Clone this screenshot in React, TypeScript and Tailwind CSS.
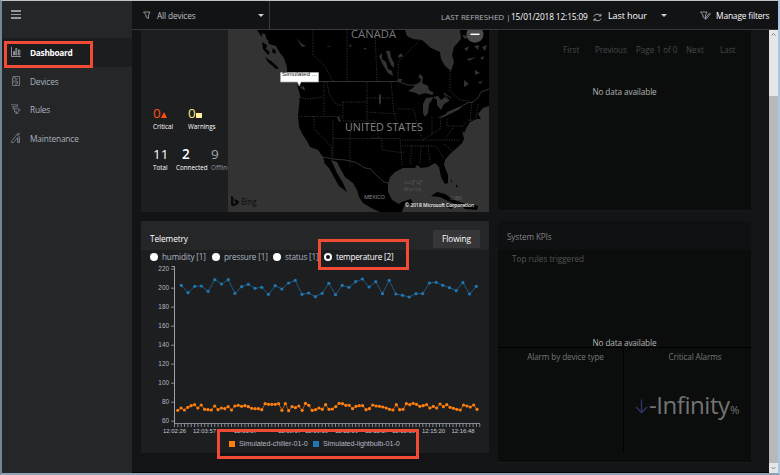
import type { ReactNode } from "react";

const blue = [
  211, 233, 214, 213, 229, 194, 207, 194, 235, 215, 208, 220, 217, 238, 212, 222, 204, 196, 238, 234, 245, 235, 205, 239,
  211, 217, 200, 192, 216, 200, 236, 196, 237, 241, 246, 236, 236, 204, 202, 211, 218, 227, 203, 237, 214,
].map((v, i) => [181.3 + i * 6.705, 215 + v / 3]);

const orange = [
  211, 204, 210, 202, 197, 194, 204, 195, 208, 209, 210, 198, 209, 204, 206, 200, 210, 198, 196, 199, 197, 200, 205, 206,
  206, 209, 191, 193, 193, 193, 191, 211, 191, 212, 200, 203, 198, 211, 190, 196, 211, 209, 204, 208, 194, 208, 207, 200,
  190, 191, 196, 196, 206, 199, 197, 197, 209, 206, 195, 198, 199, 201, 204, 208, 210, 194, 209, 208, 191, 194, 190, 193,
  199, 197, 194, 204, 199, 204, 192, 200, 194, 202, 205, 208, 210, 195, 198, 201, 195, 208,
].map((v, i) => [177.7 + i * 3.363, 340 + v / 3]);

const yTicks = [220, 200, 180, 160, 140, 120, 100, 80, 60];
const xTicks: [number, string][] = [
  [174, "12:02:26"],
  [204, "12:03:57"],
  [245, "12:05:57"],
  [289, "12:08:07"],
  [316, "12:09:39"],
  [346, "12:11:09"],
  [376, "12:12:37"],
  [403, "12:13:59"],
  [433, "12:15:20"],
  [462.5, "12:16:48"],
];

function Series({ points, color, r }: { points: number[][]; color: string; r: number }) {
  return (
    <g>
      <polyline points={points.map((p) => p.join(",")).join(" ")} fill="none" stroke={color} strokeWidth="0.8" opacity="0.8" />
      {points.map((p, i) => (
        <circle key={i} cx={p[0]} cy={p[1]} r={r} fill={color} />
      ))}
    </g>
  );
}

function Chart() {
  return (
    <svg className="block h-[170px] w-[348px]" viewBox="141 264 348 170" fontFamily="Liberation Sans, sans-serif">
      <path d="M171.5 266.5H174.5V423.5" fill="none" stroke="#9aa3ae" strokeWidth="1" />
      {yTicks.map((t, i) => (
        <g key={t}>
          <path d={`M171 ${269.2 + i * 19}h3`} stroke="#9aa3ae" strokeWidth="0.8" />
          <text x="169" y={271.4 + i * 19} fontSize="6.4" textAnchor="end" fill="#b2bac4">
            {t}
          </text>
        </g>
      ))}
      <path d="M174 423.5H480" stroke="#8b939d" strokeWidth="0.9" />
      {Array.from({ length: 92 }, (_, i) => (
        <path key={i} d={`M${174.5 + i * 3.355} 423.5v3.5`} stroke="#9aa3ae" strokeWidth="0.8" />
      ))}
      {xTicks.map(([x, t]) => (
        <text key={t} x={x + 0.5} y="432.7" fontSize="6.2" textLength="23" lengthAdjust="spacingAndGlyphs" textAnchor="middle" fill="#c4cad2">
          {t}
        </text>
      ))}
      <Series points={blue} color="#1f77b4" r={1.6} />
      <Series points={orange} color="#ff7f0e" r={1.6} />
    </svg>
  );
}

function WorldMap() {
  return (
    <svg className="block h-[182px] w-[261px]" viewBox="228 30 261 182" fontFamily="Open Sans, sans-serif">
      <rect x="228" y="30" width="261" height="182" fill="#333333" />
      <path
        fill="#000"
        d="M257 30L261 36 266 37 269 44 276 46 280 53 284 58 287 67 287 72 297 82 298 88 300 95 299 106 298 116 299 127 303 135 307 141 310 147 318 150 323 157 325 164 329 168 335 179 339 186 347 192 343 183 337 173 333 164 331 160 337 162 340 168 345 177 353 183 357 190 359 197 363 203 373 209 380 212H402L404 206 413 204 411 199 402 202 399 204 392 200 388 192 388 184 390 177 395 172 403 168 415 168 417 165 421 168 428 167 435 163 439 167 441 177 445 184 448 183 448 175 444 165 445 160 450 154 457 148 462 143 464 139 462 130 464 133 467 127 470 122 477 119 481 119 478 114 483 108 489 106V30H460L461 39 454 47 452 55 454 62 451 71 445 66 441 59 440 52 431 48 422 40 413 39 407 36 405 30Z"
      />
      <path fill="#333" d="M269 47l3 3-2 4 4 1 0 4 5 4-4 2-5-6 1-4-4-4zM262 33l4 2-1 4 4 2-2 2-5-5z" />
      <path fill="#000" d="M262 42l5 3-1 4 4 3-2 3-5-6zM265 57l6 4 8 7-3 1-8-7zM273 48l3 3-1 3-3-2z" />
      <g fill="#333">
        <path d="M408 91l5-3 2-3 5-3 1-3-3-2 2-3 3 3-1 6 6 3 1 4 5 3-2 2-7-2-6 2-3-2z" />
        <path d="M433 97l-7 1-3 6 0 9 2 4 3-4 1-9 3-4zM433 97l5-1 3 4 4-3 4 4-5 3-3 6-4-5 0-5z" />
        <path d="M437 118l9-4 1-2 12-5 3 0-4 3-6 3-8 4zM379 56l3-3 0 6 4 3 2 7 4 2 1 5-5-3-5-8zM386 51l4 0 1 6 3 6 0 5-3-3-3-7zM398 56l3-3 2 3-4 2zM337 117l2 0 2 4-2 1zM379 94l2 1 0 8-2 2zM398 79l4 0-1 3-3-1z" />
        <path d="M296 38l6 6 4 2-4 1zM349 44l3 2-2 1zM327 46l4 0-3 1zM364 48l3 0-3 2z" />
        <path d="M449 42l4-2-3 4zM464 49l5-3-2 5zM467 59l9-2-7 4zM475 70l5 3-5 2zM464 80l5 4-5 3zM480 58l4-2-1 4zM478 82l5-1-3 3zM462 35l8 1-5 3zM474 37l6-3 1 4zM474 46l5-1-1 5zM482 47l5-2-2 6z" />
        <path d="M299 84l3 3 2-1 1 5-4-3zM478 128l1 4-2-5z" />
      </g>
      <g fill="#000">
        <path d="M431 196l6-4 8 2 9 6 12 4-9 1-9-4-8-4zM462 206l8-2 8 2-1 4-12-1zM447 207l6 0-2 2zM451 178l1 4-1 0zM456 184l2 3-2 0z" />
      </g>
      <g fill="none" stroke="#3c3c3c" strokeWidth="0.8">
        <path d="M297 81.5H398L408 85 416 85M451 98L444 93 449 101M457 109l10-6 6-1 5-4 3-6 8-3M323 157l10 2 12 1 10 2 10 6 6 1 5 6 8 7 5 1" />
        <path
          strokeDasharray="1.2 1.4"
          d="M313 30V55L324 65 333 81M347 30V81M375 30L377 81M398 81V62L421 39M450 71V91L460 100 470 101M300 97l6 2 17-2M324 82V116M299 116.5H343M327 82l2 12 8 11h6M314 116v13l18 18-1 11M343 102V121H375M333 121V160M333 138.5H400M350 121V168M367 82V127M367 98H391M367 112l30 2M391 82l3 32 6 16M343 102H367M375 121l4 17M371 138h11v12l22 3M398 109H414M398 128H417M400 138l2 27M412 145l-2 19M402 146H435M402 140H460M414 110l5 22 5 9M432 117v17M441 118l-1 11-16 10M447 119v7h16M454 126l-9 13M421 146l-1 18M428 146l2 17M436 146l8 13M444 144l10 8M472 102l-2 19M478 104l-2 15M468 120h11M462 127l4-5"
        />
      </g>
      <text x="351" y="38.4" fontSize="10.6" fill="#787878" textLength="45" lengthAdjust="spacingAndGlyphs">CANADA</text>
      <text x="345" y="131" fontSize="10.6" fill="#858585" textLength="78" lengthAdjust="spacingAndGlyphs">UNITED STATES</text>
      <text x="364" y="199" fontSize="5.6" fill="#949494" textLength="21" lengthAdjust="spacingAndGlyphs">MEXICO</text>
      <g fontSize="5.2" fontStyle="italic" fill="#0c0c0c" stroke="#707070" strokeWidth="0.2">
        <text x="403.500" y="184" textLength="18" lengthAdjust="spacingAndGlyphs">Gulf of</text>
        <text x="403.500" y="191.400" textLength="18" lengthAdjust="spacingAndGlyphs">Mexico</text>
      </g>
      <text x="450" y="200" fontSize="4.500" fill="#666">CUBA</text>
      <text x="405" y="207.300" fontSize="5.800" fill="#f2f2f2" stroke="#f2f2f2" strokeWidth="0.100" textLength="69" lengthAdjust="spacingAndGlyphs">© 2018 Microsoft Corporation</text>
      <path d="M231 196l2.300 1v7l3-1.600-1.500-.8-1-2.600 5 2v2.600l-5.400 3-2.400-1.500z" fill="#080808" />
      <text x="241" y="205" fontSize="8.400" fill="#0c0c0c" textLength="15.500" lengthAdjust="spacingAndGlyphs">Bing</text>
      <circle cx="475" cy="34.300" r="8.500" fill="#4a4a4a" />
      <path d="M470.500 34.300h9" stroke="#fff" strokeWidth="1.500" />
      <path d="M280.500 72.500h38v9.500h-17.500l-1.800 4-1.800-4h-16.900z" fill="#fff" stroke="#aaa" strokeWidth="0.700" />
      <text x="282" y="76.300" fontSize="6.200" fontFamily="Liberation Sans, sans-serif" fill="#1a1a1a" textLength="35" lengthAdjust="spacingAndGlyphs">Simulated ...</text>
    </svg>
  );
}

function NavIcon({ children }: { children: ReactNode }) {
  return (
    <svg viewBox="0 0 10 10" className="h-[10px] w-[10px] shrink-0" fill="none" stroke="#7e8791" strokeWidth="0.8">
      {children}
    </svg>
  );
}

const nav: [string, ReactNode][] = [
  ["Dashboard", <path key="a" d="M.5 0v9.500H10M2.500 8V4.500h1V8zM4.800 8V1.500h1V8zM7.500 8V3h1.300v5z" stroke="#a5acb3" />],
  ["Devices", <path key="b" d="M2 2V.5h6.500v9H4.500M1.500 2h3.500v7.500H1.500zM3 4v3M6.500 2.500v1M6.500 5v3" />],
  ["Rules", <path key="c" d="M0 .8h6.500v2H1.200M2 2.800v2h6v2M3.500 4.800v3h2M5.500 9.300L9.500 5.300M5.500 9.300l-.3-2M7.500 9.300H4" />],
  ["Maintenance", <path key="d" d="M.5 9.500V8L4.500 3.500 6 1 8.500.5 7 2.500 8.500 4v5.500H6.500V4.500L2.500 9.500zM6.500 6h2M6.500 8h2" />],
];

function Sidebar() {
  return (
    <aside className="flex w-[130px] shrink-0 flex-col bg-[#252628]">
      <div className="flex h-[37px] shrink-0 flex-col gap-[2px] pl-[9px] pt-[9px]">
        <span className="h-[1.500px] w-[10px] bg-[#969a9e]" />
        <span className="h-[1.500px] w-[10px] bg-[#969a9e]" />
        <span className="h-[1.500px] w-[10px] bg-[#969a9e]" />
      </div>
      {nav.map(([label, icon], i) => (
        <div
          key={label}
          className={
            "flex h-[28.600px] shrink-0 items-center gap-[9px] pl-[9px] text-[8.300px] " +
            (i === 0 ? "bg-[#1c1d1f] font-bold text-white" : "text-[#a9b3be]")
          }
        >
          <NavIcon>{icon}</NavIcon>
          <span className={i === 0 ? "pt-[2px] tracking-[-0.3px]" : "pt-[2px] tracking-[-0.15px]"}>{label}</span>
        </div>
      ))}
    </aside>
  );
}

function Caret() {
  return <span className="h-0 w-0 border-x-[3px] border-t-[3px] border-x-transparent border-t-[#c9cdd0]" />;
}

function Funnel({ edit }: { edit?: boolean }) {
  return (
    <svg viewBox="0 0 11 9" className="h-[9px] w-[11px]" fill="none" stroke="#aab0b6" strokeWidth="0.8">
      <path d="M.5 1H7L5.500 4v3.500L3 6V4z" />
      {edit && <path d="M5.500 7l4-5 1 .8-4 5-1.300.4z" />}
    </svg>
  );
}

function Header() {
  return (
    <header className="flex h-[29px] shrink-0 border-b border-[#38383c] bg-[#121315] text-[8.500px] text-white">
      <div className="flex w-[138px] items-center border-r border-[#38383c] pl-[11px] pr-[5px] text-[#b8c0c8]">
        <Funnel />
        <span className="ml-[3px] flex-1 pt-[2px] text-[8.300px] tracking-[-0.15px]">All devices</span>
        <Caret />
      </div>
      <div className="flex flex-1 items-center pl-[171px]">
        <span className="w-[70px] whitespace-nowrap pt-[4px] text-[8px] tracking-[-0.03px] text-[#adb5bd]">LAST REFRESHED |</span>
        <span className="w-[82px] whitespace-nowrap pt-[4px] text-[8.300px] tracking-[-0.12px]">15/01/2018 12:15:09</span>
        <svg viewBox="0 0 9 9" className="mt-[4px] h-[9px] w-[9px]" fill="none" stroke="#b9bfc5" strokeWidth="0.900">
          <path d="M.8 3.500C1.500 1 6 .3 7.600 3M8 .8V3H5.800M8.200 5.500C7.500 8 3 8.700 1.400 6M1 8.200V6h2.200" />
        </svg>
        <span className="ml-[6px] w-[53px] pt-[2px] text-[9px] tracking-[-0.1px]">Last hour</span>
        <Caret />
        <span className="ml-[33px]">
          <Funnel edit />
        </span>
        <span className="ml-[5px] whitespace-nowrap pt-[2px] text-[8.400px] tracking-[-0.15px]">Manage filters</span>
      </div>
    </header>
  );
}

function Stat({ value, label, width, tone, mark }: { value: string; label: string; width: string; tone: string; mark?: ReactNode }) {
  return (
    <div className={"flex shrink-0 flex-col " + width}>
      <div className={"flex h-[16px] items-end text-[13.500px] leading-[16px] " + tone}>
        {value}
        {mark}
      </div>
      <span className="mt-[1px] whitespace-nowrap text-[6.300px] leading-[9px]">{label}</span>
    </div>
  );
}

function DevicesCard() {
  return (
    <section className="flex h-[182px] bg-[#1d1e20]">
      <div className="flex w-[87px] flex-col overflow-hidden pl-[12px] pt-[75px] text-white">
        <div className="flex h-[41px]">
          <Stat
            value="0"
            label="Critical"
            width="w-[35px]"
            tone="text-[#ff5010]"
            mark={<span className="mb-[3px] h-0 w-0 border-x-[3.500px] border-b-[6px] border-x-transparent border-b-[#ff5010]" />}
          />
          <Stat value="0" label="Warnings" width="w-[35px]" tone="text-[#f5e67a]" mark={<span className="mb-[3px] h-[5px] w-[6px] bg-[#fff09a]" />} />
        </div>
        <div className="flex">
          <Stat value="11" label="Total" width="w-[23px]" tone="text-white" />
          <Stat value="2" label="Connected" width="w-[35px]" tone="pl-[6px] font-semibold text-white" />
          <div className="text-[#8d959e]">
            <Stat value="9" label="Offline" width="w-[24px]" tone="text-[#a0a8b0]" />
          </div>
        </div>
      </div>
      <WorldMap />
    </section>
  );
}

function Radio({ label, width, selected }: { label: string; width: string; selected?: boolean }) {
  return (
    <div className={"flex items-center gap-[4px] whitespace-nowrap " + width}>
      <span className="flex h-[8px] w-[8px] items-center justify-center rounded-full bg-white">
        {selected && <span className="h-[4px] w-[4px] rounded-full bg-[#111]" />}
      </span>
      <span className={selected ? "tracking-[-0.22px] text-white" : "tracking-[-0.18px] text-[#a9b5c2]"}>{label}</span>
    </div>
  );
}

function Telemetry() {
  return (
    <section className="flex h-[232px] flex-col bg-[#1d1e20]">
      <div className="flex h-[29px] shrink-0 items-center justify-between bg-[#252628] pl-[9px] pr-[9px] pt-[6px] text-[8.300px] text-white">
        <span className="pt-[2px] tracking-[-0.1px]">Telemetry</span>
        <span className="flex h-[18px] w-[47px] items-center justify-center bg-[#363638] pt-[1px] tracking-[-0.1px]">Flowing</span>
      </div>
      <div className="flex h-[14px] shrink-0 items-center pl-[9px] pt-[1px] text-[8.200px]">
        <Radio label="humidity [1]" width="w-[62px]" />
        <Radio label="pressure [1]" width="w-[61px]" />
        <Radio label="status [1]" width="w-[51px]" />
        <Radio label="temperature [2]" width="w-[80px]" selected />
      </div>
      <Chart />
      <div className="flex h-[19px] items-center whitespace-nowrap pl-[88px] pt-[1px] font-['Liberation_Sans',sans-serif] text-[7.200px] text-[#b0b8c2]">
        <span className="h-[6px] w-[6px] bg-[#ff7f0e]" />
        <span className="ml-[4px] w-[74px] pt-[1px] tracking-[-0.05px]">Simulated-chiller-01-0</span>
        <span className="h-[6px] w-[6px] bg-[#1f77b4]" />
        <span className="ml-[4px] pt-[1px] tracking-[-0.05px]">Simulated-lightbulb-01-0</span>
      </div>
    </section>
  );
}

function AlarmsCard() {
  return (
    <section className="flex h-[181px] flex-col border-b border-[#17191a] bg-[#0b0d0c] text-[8.100px]">
      <div className="flex pl-[65px] pt-[14px] text-[#45484c]">
        <span className="w-[32px]">First</span>
        <span className="w-[41px] tracking-[-0.1px]">Previous</span>
        <span className="w-[50px] whitespace-nowrap">Page 1 of 0</span>
        <span className="w-[34px]">Next</span>
        <span>Last</span>
      </div>
      <span className="pt-[30px] text-center text-[8.200px] tracking-[-0.1px] text-[#b4b4b4]">No data available</span>
    </section>
  );
}

function Kpis() {
  return (
    <section className="flex h-[242px] flex-col border-b border-[#191b1b] bg-[#0b0d0c] text-[8.200px] tracking-[-0.12px] text-[#747678]">
      <div className="flex h-[29px] shrink-0 items-center bg-[#0f1011] pl-[9px] pt-[4px] text-[#808284]">System KPIs</div>
      <div className="flex h-[98px] shrink-0 flex-col justify-between border-b border-black pl-[14px]">
        <span className="pt-[3px] tracking-[-0.02px] text-[#525457]">Top rules triggered</span>
        <span className="mb-[-2px] pr-[14px] text-center text-[#b4b4b4]">No data available</span>
      </div>
      <div className="flex h-[104px] shrink-0">
        <div className="w-[126px] border-r border-black pl-[10px] pt-[3px] text-center">Alarm by device type</div>
        <div className="flex w-[127px] flex-col">
          <span className="pl-[15px] pt-[3px] text-center">Critical Alarms</span>
          <div className="mt-[27px] flex items-baseline whitespace-nowrap pl-[11px] leading-[30px]">
            <svg viewBox="0 0 14 15" className="h-[15px] w-[13px] shrink-0" fill="none" stroke="#2e3566" strokeWidth="1.500">
              <path d="M7 0v14M1 8l6 6 6-6" />
            </svg>
            <span className="ml-[1px] w-[81px] text-[24px] tracking-[-0.450px] text-[#737373]">-Infinity</span>
            <span className="text-[11.500px]">%</span>
          </div>
        </div>
      </div>
    </section>
  );
}

function Scrollbar() {
  return (
    <div className="flex w-[9px] shrink-0 flex-col bg-[#e6e6e6]">
      <svg viewBox="0 0 9 9" className="h-[9px] w-[9px]" fill="none" stroke="#888">
        <path d="M2.500 5.500l2-2 2 2" />
      </svg>
      <div className="mt-[57px] flex-1 bg-[#b8b8b8]" />
      <svg viewBox="0 0 9 10" className="h-[10px] w-[9px]" fill="none" stroke="#888">
        <path d="M2.500 4l2 2 2-2" />
      </svg>
    </div>
  );
}

export default function App() {
  return (
    <div className="relative flex h-[475px] w-[780px] overflow-hidden border-b-2 border-l-2 border-r-2 border-t border-b-[#8fa3b8] border-l-[#6f8796] border-r-[#a9c6e6] border-t-[#bcc5c5] bg-[#131416] font-['Open_Sans','Noto_Sans',sans-serif]">
      <Sidebar />
      <div className="flex min-w-0 flex-1 flex-col">
        <Header />
        <div className="flex min-h-0 flex-1">
          <main className="flex min-w-0 flex-1 gap-[9px] border-b border-black pl-[9px]">
            <div className="flex w-[348px] shrink-0 flex-col gap-[9px]">
              <DevicesCard />
              <Telemetry />
            </div>
            <div className="flex w-[253px] shrink-0 flex-col gap-[10px]">
              <AlarmsCard />
              <Kpis />
            </div>
          </main>
          <Scrollbar />
        </div>
      </div>
      <div className="absolute left-[2px] top-[40px] h-[27px] w-[89px] border-[3px] border-[#f14a35]" />
      <div className="absolute left-[316px] top-[238px] h-[31px] w-[91px] border-[3px] border-[#f14a35]" />
      <div className="absolute left-[215px] top-[428px] h-[30px] w-[202px] border-[3px] border-[#f14a35]" />
    </div>
  );
}
